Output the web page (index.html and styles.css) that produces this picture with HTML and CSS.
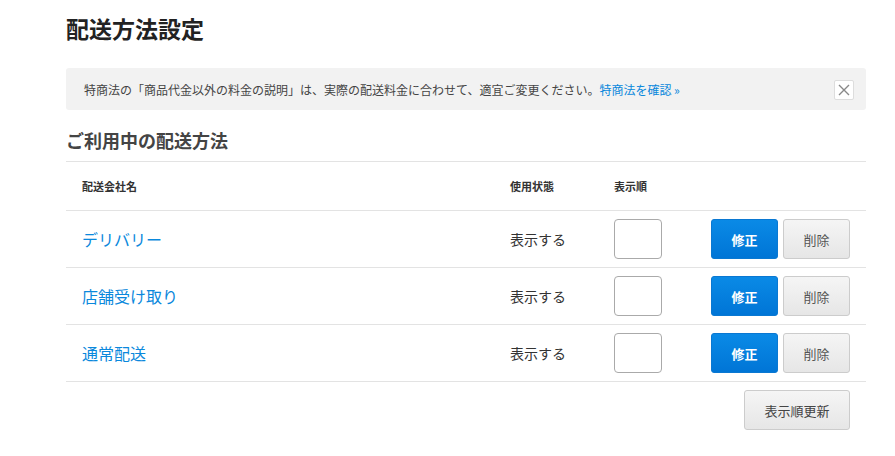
FILE: index.html
```html
<!DOCTYPE html>
<html lang="ja">
<head>
    <meta charset="UTF-8">
    <meta name="viewport" content="width=device-width, initial-scale=1.0">
    <title>配送方法設定</title>
    <link rel="stylesheet" href="styles.css">
</head>
<body>
    <div class="container">
        <h1 class="page-title">配送方法設定</h1>

        <div class="notice">
            <p>特商法の「商品代金以外の料金の説明」は、実際の配送料金に合わせて、適宜ご変更ください。<a href="#">特商法を確認 »</a></p>
            <button class="close-button" aria-label="閉じる">
                <svg width="12" height="12" viewBox="0 0 12 12"><path d="M1 1L11 11M11 1L1 11" stroke="#888" stroke-width="1.4" fill="none"/></svg>
            </button>
        </div>

        <h2 class="section-title">ご利用中の配送方法</h2>

        <table class="delivery-table">
            <thead>
                <tr>
                    <th class="col-name">配送会社名</th>
                    <th class="col-status">使用状態</th>
                    <th class="col-order">表示順</th>
                    <th class="col-actions"></th>
                </tr>
            </thead>
            <tbody>
                <tr>
                    <td class="col-name"><a href="#">デリバリー</a></td>
                    <td class="col-status">表示する</td>
                    <td class="col-order"><input type="text" class="order-input"></td>
                    <td class="col-actions"><button class="btn btn-primary">修正</button><button class="btn">削除</button></td>
                </tr>
                <tr>
                    <td class="col-name"><a href="#">店舗受け取り</a></td>
                    <td class="col-status">表示する</td>
                    <td class="col-order"><input type="text" class="order-input"></td>
                    <td class="col-actions"><button class="btn btn-primary">修正</button><button class="btn">削除</button></td>
                </tr>
                <tr>
                    <td class="col-name"><a href="#">通常配送</a></td>
                    <td class="col-status">表示する</td>
                    <td class="col-order"><input type="text" class="order-input"></td>
                    <td class="col-actions"><button class="btn btn-primary">修正</button><button class="btn">削除</button></td>
                </tr>
            </tbody>
        </table>

        <div class="table-footer">
            <button class="btn btn-update">表示順更新</button>
        </div>
    </div>
</body>
</html>
```

FILE: styles.css
```css
body {
    font-family: "Noto Sans CJK JP", "Noto Sans", sans-serif;
    margin: 0;
    padding: 0;
    color: #333;
    background-color: #fff;
}

.container {
    width: 800px;
    margin-left: 66px;
    padding-top: 12px;
}

.page-title {
    font-size: 23px;
    font-weight: bold;
    color: #222;
    margin: 0;
    line-height: 32px;
}

.notice {
    display: flex;
    align-items: center;
    justify-content: space-between;
    margin-top: 24px;
    height: 42px;
    padding: 0 12px 0 18px;
    background-color: #f2f2f2;
    border-radius: 3px;
}

.notice p {
    margin: 0;
    font-size: 12px;
    color: #444;
}

.notice a {
    color: #0a88dc;
    text-decoration: none;
}

.close-button {
    display: flex;
    align-items: center;
    justify-content: center;
    width: 20px;
    height: 20px;
    padding: 0;
    margin-top: 2px;
    background-color: #fff;
    border: 1px solid #ddd;
    border-radius: 2px;
}

.section-title {
    font-size: 18px;
    font-weight: bold;
    color: #444;
    margin: 16px 0 0;
    line-height: 28px;
    padding-bottom: 7px;
}

.delivery-table {
    width: 100%;
    border-collapse: collapse;
    table-layout: fixed;
    border-top: 1px solid #e3e3e3;
}

.delivery-table th {
    font-size: 11px;
    font-weight: bold;
    color: #333;
    text-align: left;
    height: 48px;
    padding: 0;
    border-bottom: 1px solid #e3e3e3;
}

.delivery-table td {
    height: 56px;
    padding: 0;
    border-bottom: 1px solid #e3e3e3;
    font-size: 14px;
}

.delivery-table .col-name {
    width: 428px;
    padding-left: 16px;
}

.col-status {
    width: 104px;
}

.col-order {
    width: 97px;
}

.delivery-table .col-actions {
    text-align: right;
    white-space: nowrap;
    padding-right: 16px;
}

.delivery-table td a {
    color: #0a88dc;
    text-decoration: none;
    font-size: 16px;
}

.order-input {
    display: block;
    width: 48px;
    height: 40px;
    box-sizing: border-box;
    border: 1px solid #aaa;
    border-radius: 4px;
}

.btn {
    font-family: inherit;
    width: 67px;
    height: 40px;
    font-size: 13px;
    color: #555;
    background: linear-gradient(#f5f5f5, #e6e6e6);
    border: 1px solid #ccc;
    border-radius: 3px;
    margin-left: 5px;
    vertical-align: middle;
}

.btn-primary {
    margin-left: 0;
    color: #fff;
    font-weight: bold;
    background: linear-gradient(#0a8ae6, #0075d6);
    border-color: #0a78d2;
}

.table-footer {
    display: flex;
    justify-content: flex-end;
    padding: 8px 16px 0 0;
}

.btn-update {
    width: 106px;
    height: 40px;
    font-size: 13px;
    color: #444;
    margin-left: 0;
}
```
